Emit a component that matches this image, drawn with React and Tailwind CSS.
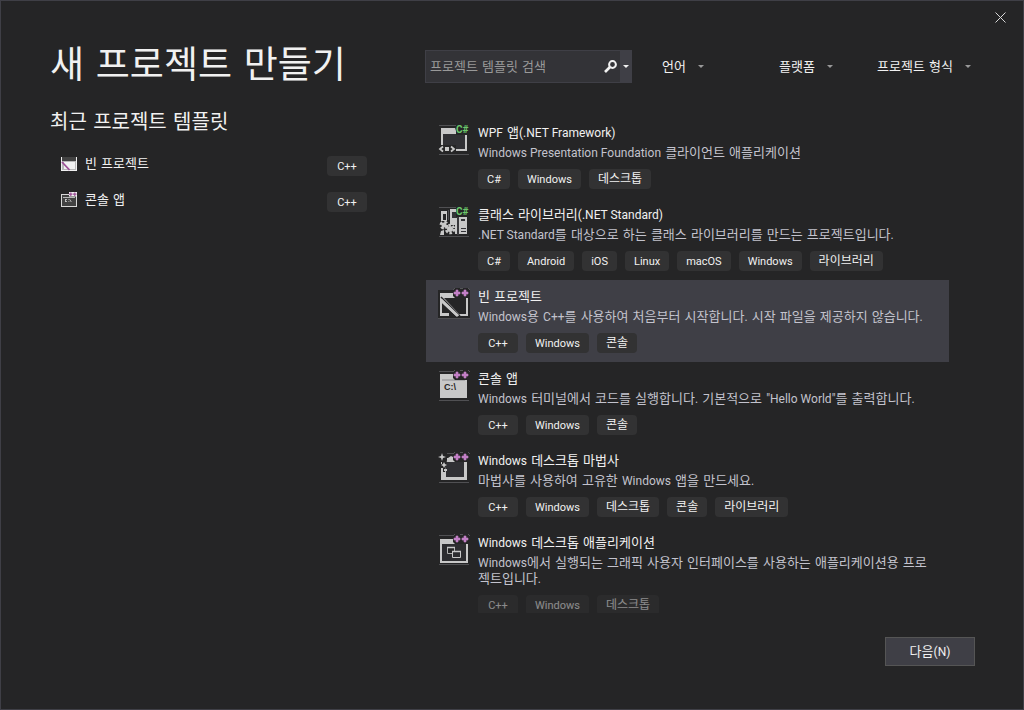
import { useState } from "react";

const recientes = [
  { id: 1, nombre: "빈 프로젝트", etiqueta: "C++", icono: "vacio" },
  { id: 2, nombre: "콘솔 앱", etiqueta: "C++", icono: "consola" }
];

const filtros = [
  { id: "language", nombre: "언어", ancho: "min-w-[73px]" },
  { id: "platform", nombre: "플랫폼", ancho: "" },
  { id: "type", nombre: "프로젝트 형식", ancho: "" }
];

const plantillas = [
  {
    id: 1,
    icono: "wpf",
    titulo: "WPF 앱(.NET Framework)",
    descripcion: "Windows Presentation Foundation 클라이언트 애플리케이션",
    etiquetas: ["C#", "Windows", "데스크톱"]
  },
  {
    id: 2,
    icono: "libreria",
    titulo: "클래스 라이브러리(.NET Standard)",
    descripcion: ".NET Standard를 대상으로 하는 클래스 라이브러리를 만드는 프로젝트입니다.",
    etiquetas: ["C#", "Android", "iOS", "Linux", "macOS", "Windows", "라이브러리"]
  },
  {
    id: 3,
    icono: "vacio",
    titulo: "빈 프로젝트",
    descripcion: "Windows용 C++를 사용하여 처음부터 시작합니다. 시작 파일을 제공하지 않습니다.",
    etiquetas: ["C++", "Windows", "콘솔"]
  },
  {
    id: 4,
    icono: "consola",
    titulo: "콘솔 앱",
    descripcion: "Windows 터미널에서 코드를 실행합니다. 기본적으로 \"Hello World\"를 출력합니다.",
    etiquetas: ["C++", "Windows", "콘솔"]
  },
  {
    id: 5,
    icono: "asistente",
    titulo: "Windows 데스크톱 마법사",
    descripcion: "마법사를 사용하여 고유한 Windows 앱을 만드세요.",
    etiquetas: ["C++", "Windows", "데스크톱", "콘솔", "라이브러리"]
  },
  {
    id: 6,
    icono: "escritorio",
    titulo: "Windows 데스크톱 애플리케이션",
    descripcion: "Windows에서 실행되는 그래픽 사용자 인터페이스를 사용하는 애플리케이션용 프로젝트입니다.",
    etiquetas: ["C++", "Windows", "데스크톱"]
  }
];

// Latin runs are set one size smaller than the Hangul around them
function Texto({ children, latin = "font-['Roboto',sans-serif] text-[12px]" }) {
  return children.split(/([!-~]+(?: [!-~]+)*)/).map((parte, i) =>
    i % 2 ? <span key={i} className={latin}>{parte}</span> : parte
  );
}

function Flecha({ className }) {
  return (
    <svg viewBox="0 0 6 3" className={`w-1.5 h-[3px] shrink-0 ${className}`} aria-hidden="true">
      <path d="M0 0h6L3 3z" fill="currentColor" />
    </svg>
  );
}

function MasMas() {
  return (
    <g>
      <path d="M17 0h13l2 3v5l-2 2H17l-2-2V3z" fill="#252526" />
      <path d="M15 2l2-2M32 2l-2-2M22 .500h3" stroke="#555558" />
      <path d="M18 2h2v2h2v2h-2v2h-2V6h-2V4h2zM26 2h2v2h2v2h-2v2h-2V6h-2V4h2z" fill="#c27fc6" stroke="#c27fc6" strokeWidth=".6" />
    </g>
  );
}

function CSharp() {
  return (
    <g>
      <path d="M18 1h14v10H18z" fill="#252526" />
      <text x="18" y="9" fontSize="10" fontWeight="700" fill="#6cc86c" className="font-['Roboto',sans-serif]">C#</text>
    </g>
  );
}

function IconoPlantilla({ tipo }) {
  return (
    <svg viewBox="0 0 32 32" className="w-8 h-8 shrink-0 overflow-visible" aria-hidden="true">
      <path d={tipo === "vacio" ? "M0 2.500h32M0 30.500h32" : "M1 1.500h17M1 30.500h30"} stroke="#505053" />
      {tipo === "vacio" && <path d="M0 2h32v28H0z" fill="#252526" />}
      {tipo === "wpf" && (
        <g>
          <path d="M3 4h26v23H3z" fill="#303034" />
          <path d="M3 4h14l2 6H5v12H3zM27 10h2v17H18v-2h9z" fill="#c8c8c8" />
          <path d="M0 21h18v9H0z" fill="#252526" />
          <path d="M5 22.500l-3 2.500 3 2.500M13 22.500l3 2.500-3 2.500" fill="none" stroke="#c8c8c8" strokeWidth="1.800" />
          <path d="M7 23h4v4H7z" fill="#c8c8c8" />
          <CSharp />
        </g>
      )}
      {tipo === "libreria" && (
        <g>
          <path d="M3 5h6v11H3zM12 3h7v25h-7zM21 10h8v18h-8z" fill="#c8c8c8" />
          <path d="M5 8h3v6H5z" fill="#252526" />
          <path d="M14 6h6v6h-6zM23 13h4v2h-4zM23 22h5v1h-5zM23 25h5v1h-5z" fill="#333337" />
          <path d="M10.500 4v10M20 11v18" stroke="#4c4c50" />
          <path d="M2 15h8v4h7v10H6l-1-4H1v-8z" fill="#252526" />
          <circle cx="6" cy="19" r="2.500" fill="#c8c8c8" />
          <circle cx="6" cy="19" r="3" fill="none" stroke="#c8c8c8" strokeWidth="3" strokeDasharray="2.700 2" />
          <circle cx="12" cy="23" r="3" fill="#c8c8c8" />
          <circle cx="12" cy="23" r="4" fill="none" stroke="#c8c8c8" strokeWidth="2.500" strokeDasharray="2.600 1.600" />
          <path d="M3 25l3-1v5H2z" fill="#c8c8c8" />
          <CSharp />
        </g>
      )}
      {tipo === "vacio" && (
        <g>
          <path d="M3 5h13v2l2 3H6l16 17v1h-4L4 15v10h7v3H2V5zM28 10h2v18h-8l-2-2h8z" fill="#c8c8c8" />
          <path d="M3 9l19 19" stroke="#252526" strokeWidth="1.500" />
          <path d="M3 12l17 16" stroke="#c8c8c8" strokeWidth="3" />
          <MasMas />
        </g>
      )}
      {tipo === "consola" && (
        <g>
          <path d="M2 4h27v24H2z" fill="#c8c8c8" />
          <path d="M4 10h23" stroke="#8a8a8d" />
          <text x="6" y="20" fontSize="9" fontWeight="700" fill="#252526" className="font-['Liberation_Sans',sans-serif]">C:\</text>
          <MasMas />
        </g>
      )}
      {tipo === "asistente" && (
        <g>
          <path d="M3 6h26v22H3z" fill="#c8c8c8" />
          <path d="M9 10h17v15H8V10z" fill="#303034" />
          <path d="M0 0h9v8l-2 12H0z" fill="#252526" />
          <path d="M4 1l1 3 3 1-3 1-1 3-1-3-3-1 3-1zM6 10l1 2 2 1-2 1-1 2-1-2-2-1 2-1zM3 16h2v6H3zM6 17h3v2H6zM6 21h2v2H6zM3 10h1v2H3z" fill="#c8c8c8" />
          <path d="M10 6l3-2 4 2 1 3-3 1h-5z" fill="#c8c8c8" />
          <MasMas />
        </g>
      )}
      {tipo === "escritorio" && (
        <g>
          <path d="M2 5h28v24H2z" fill="#c8c8c8" />
          <path d="M4 10h24v17H4z" fill="#2d2d30" />
          <path d="M9.500 13.500h7v6h-7z" fill="#252526" stroke="#b0b0b0" />
          <path d="M14.500 17.500h8v6h-8z" fill="#2d2d30" stroke="#c8c8c8" />
          <path d="M9 13.500h8M14 17.500h9" stroke="#c8c8c8" strokeWidth="1.500" />
          <MasMas />
        </g>
      )}
    </svg>
  );
}

function IconoReciente({ tipo }) {
  return (
    <svg viewBox="0 0 16 16" className="w-4 h-4 shrink-0" aria-hidden="true">
      {tipo === "vacio" ? (
        <g>
          <path d="M0 1h16v14H0z" fill="#f1f1f1" />
          <path d="M1 1h14v4H1z" fill="#424242" />
          <path d="M1 5h14v9H1z" fill="#b8b8b8" />
          <path d="M3 6h11v7H3z" fill="#f1f1f1" />
          <path d="M1 6L8.500 14" stroke="#9b4f96" strokeWidth="1.800" />
        </g>
      ) : (
        <g>
          <path d="M0 2h16v13H0z" fill="#d8d8d8" />
          <path d="M1 3h14v11H1z" fill="#424242" />
          <path d="M2 5.500h12" stroke="#b8b8b8" />
          <path d="M4 7.500h2M4 9.500h2M4.500 7.500v2M7.500 7.500h.8M7.500 9.500h.8M8.800 7.500l1.500 2.500" stroke="#d8d8d8" strokeWidth=".8" />
          <path d="M8 0h8v4.500H8z" fill="#f1f1f1" />
          <path d="M8 2.200h3.500M12 2.200h3.500M9.800 .6v3.300M13.800 .6v3.300" stroke="#9b4f96" strokeWidth="1.200" />
        </g>
      )}
    </svg>
  );
}

function Etiqueta({ texto }) {
  return (
    <span className={`h-5 px-[9px] rounded bg-[#323233] text-center text-[12px] leading-5 whitespace-nowrap text-[#f1f1f1] ${texto === "C++" ? 'min-w-10' : ''}`}>
      <Texto latin="font-['Roboto',sans-serif] text-[11px]">{texto}</Texto>
    </span>
  );
}

export default function NuevoProyecto() {
  const [seleccion, setSeleccion] = useState(3);
  const [busqueda, setBusqueda] = useState("");

  return (
    <div className="h-screen flex flex-col overflow-hidden border border-[#3f3f46] bg-[#252526] text-[13px] text-[#f1f1f1] font-['DejaVu_Sans','Noto_Sans_CJK_KR',sans-serif]">
      {/* Barra de la ventana */}
      <div className="flex justify-end h-8 pr-[17px] pt-[11px]">
        <button type="button" aria-label="닫기" className="w-[11px] h-[11px]">
          <svg viewBox="0 0 11 11" className="w-full h-full">
            <path d="M.5.5l10 10M10.500.5l-10 10" stroke="#d8d8d8" />
          </svg>
        </button>
      </div>

      <div className="flex flex-1 min-h-0 pl-[49px] pr-12">
        {/* Recientes */}
        <section className="w-[317px] shrink-0 mr-[58px] pt-[9px]">
          <h1 className="text-[37px] leading-12 whitespace-nowrap">새 프로젝트 만들기</h1>
          <h2 className="mt-[18px] text-[20px] leading-7 whitespace-nowrap">최근 프로젝트 템플릿</h2>
          <ul className="mt-[18px] space-y-3">
            {recientes.map((item) => (
              <li key={item.id}>
                <button type="button" className="flex w-full h-6 items-start pl-[11px] text-left">
                  <span className="flex flex-1 h-5 items-center gap-2">
                    <IconoReciente tipo={item.icono} />
                    {item.nombre}
                  </span>
                  <span className="flex pt-0.5">
                    <Etiqueta texto={item.etiqueta} />
                  </span>
                </button>
              </li>
            ))}
          </ul>
        </section>

        <section className="flex flex-1 min-w-0 flex-col pt-[17px]">
          {/* Búsqueda y filtros */}
          <div className="flex items-center">
            <div className="flex flex-1 max-w-[207px] h-[33px] border border-[#3f3f46] bg-[#333337]">
              <input
                type="text"
                aria-label="프로젝트 템플릿 검색"
                placeholder="프로젝트 템플릿 검색"
                value={busqueda}
                onChange={(e) => setBusqueda(e.target.value)}
                className="flex-1 min-w-0 pl-1 bg-transparent outline-none placeholder:text-[#999999]"
              />
              <button type="button" aria-label="검색" className="flex w-[19px] items-center justify-center">
                <svg viewBox="0 0 13 13" className="w-[13px] h-[13px]">
                  <circle cx="8.500" cy="4.500" r="3.400" fill="none" stroke="#f1f1f1" strokeWidth="2" />
                  <path d="M6 7l-5 5" stroke="#f1f1f1" strokeWidth="2.600" />
                </svg>
              </button>
              <button type="button" aria-label="검색 기록" className="flex w-[11px] items-center justify-center bg-[#3f3f46]">
                <Flecha className="text-[#f1f1f1]" />
              </button>
            </div>
            <div className="flex ml-[30px] gap-11">
              {filtros.map((filtro) => (
                <label key={filtro.id} className={`flex items-center gap-3 ${filtro.ancho}`}>
                  <select aria-label={filtro.nombre} className="appearance-none bg-transparent leading-5">
                    <option>{filtro.nombre}</option>
                  </select>
                  <Flecha className="text-[#999999]" />
                </label>
              ))}
            </div>
          </div>

          {/* Lista de plantillas */}
          <ul className="flex-1 min-h-0 overflow-hidden mt-[33px] ml-px mr-[26px]">
            {plantillas.map((p, index) => (
              <li key={p.id}>
                <button
                  type="button"
                  onClick={() => setSeleccion(p.id)}
                  className={`flex w-full items-start gap-2 pt-[7px] pb-2 pl-3 pr-4 text-left ${seleccion === p.id ? 'bg-[#3f3f46]' : ''}`}
                >
                  <span className="pt-px">
                    <IconoPlantilla tipo={p.icono} />
                  </span>
                  <span className="flex flex-1 flex-col">
                    <span className="leading-5"><Texto>{p.titulo}</Texto></span>
                    <span className="mt-0.5 leading-4 text-[#c3c3cd]"><Texto>{p.descripcion}</Texto></span>
                    <span className={`flex gap-2 mt-2 ${index === plantillas.length - 1 ? 'opacity-50' : ''}`}>
                      {p.etiquetas.map((etiqueta) => (
                        <Etiqueta key={etiqueta} texto={etiqueta} />
                      ))}
                    </span>
                    <span className="h-px" />
                  </span>
                </button>
              </li>
            ))}
          </ul>

          {/* Footer */}
          <div className="flex justify-end pt-6 pb-[43px]">
            <button type="button" className="h-[29px] min-w-[90px] border border-[#555555] bg-[#3f3f46]">
              <Texto>다음(N)</Texto>
            </button>
          </div>
        </section>
      </div>
    </div>
  );
}
